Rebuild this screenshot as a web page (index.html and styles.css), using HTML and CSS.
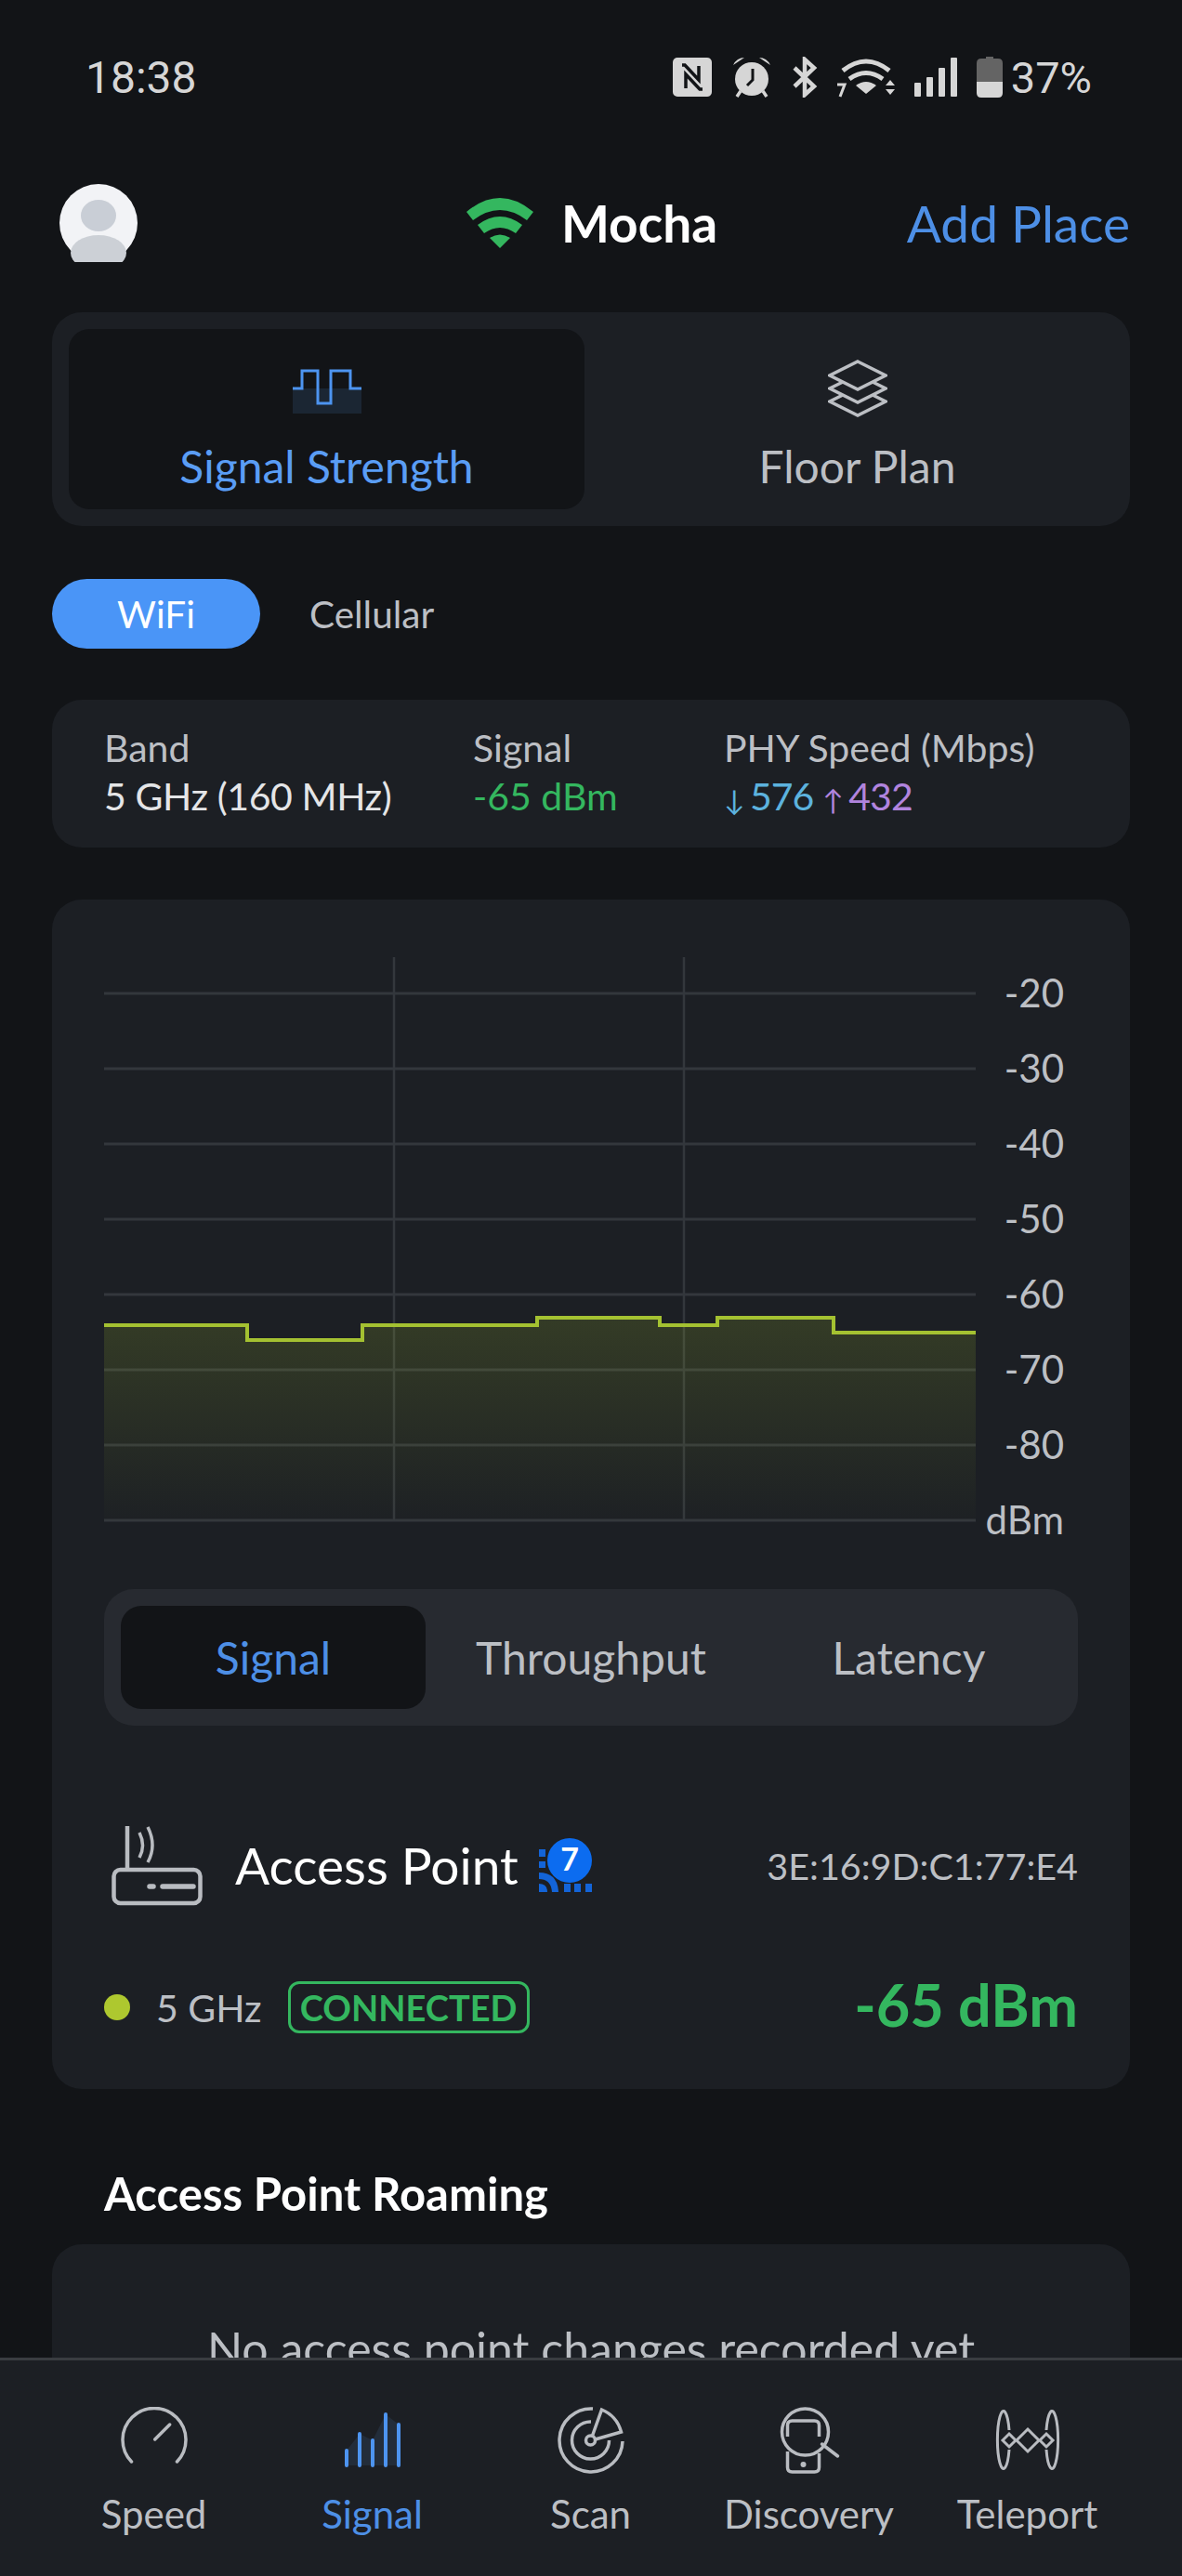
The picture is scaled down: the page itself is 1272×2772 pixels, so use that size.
FILE: index.html
```html
<!DOCTYPE html>
<html>
	<head>
		<title>Signal Strength</title>
		<link rel="stylesheet" href="styles.css">
	</head>
	<body>
		<div id="app">
			<!--status bar-->
			<div class="status">
				<span class="time">18:38</span>
				<div class="statusIcons">
					<svg width="42" height="42" viewBox="0 0 42 42"><rect width="42" height="42" rx="5" fill="#d6d6d6"/><path d="M10 8h3l15 16V9M32 34h-3L14 18v15" fill="none" stroke="#121417" stroke-width="3.5"/></svg>
					<svg width="44" height="46" viewBox="0 0 44 46"><circle cx="22" cy="25" r="18" fill="#d6d6d6"/><path d="M2 10q4-8 12-8zM42 10q-4-8-12-8z" fill="#d6d6d6"/><path d="M10 38l-4 6M34 38l4 6" stroke="#d6d6d6" stroke-width="3.5"/><path d="M23 14v12l-6 6" fill="none" stroke="#121417" stroke-width="3"/></svg>
					<svg width="28" height="44" viewBox="0 0 28 44"><path d="M3 12l21 20-10 9V3l10 9L3 32" fill="none" stroke="#d6d6d6" stroke-width="4.5"/></svg>
					<svg width="62" height="46" viewBox="0 0 62 46"><path d="M6 16q25-20 50 0M13 25q18-13 36 0" fill="none" stroke="#d6d6d6" stroke-width="5"/><path d="M20 32q11-8 22 0l-11 9z" fill="#d6d6d6"/><path d="M52 32l5-6 5 6zM52 36l5 6 5-6z" fill="#d6d6d6"/><path d="M0 31h8l-5 13" fill="none" stroke="#d6d6d6" stroke-width="3"/></svg>
					<svg width="46" height="42" viewBox="0 0 46 42" fill="#d6d6d6"><rect y="27" width="7" height="15" rx="1"/><rect x="13" y="21" width="7" height="21" rx="1"/><rect x="26" y="11" width="7" height="31" rx="1"/><rect x="39" width="7" height="42" rx="1"/></svg>
					<svg width="28" height="44" viewBox="0 0 28 44"><path d="M5 2h5V0h8v2h5q5 0 5 5v20H0V7q0-5 5-5z" fill="#646464"/><path d="M0 27h28v12q0 5-5 5H5q-5 0-5-5z" fill="#d6d6d6"/></svg>
					<span class="pct">37%</span>
				</div>
			</div>

			<!--top bar-->
			<div class="topbar">
				<div class="avatar">
					<svg width="84" height="84" viewBox="0 0 84 84"><circle cx="42" cy="42" r="42" fill="#f2f3f6"/><ellipse cx="42" cy="34" rx="19" ry="17" fill="#c9ced6"/><ellipse cx="42" cy="74" rx="30" ry="19" fill="#ccd0d6"/></svg>
				</div>
				<div class="place">
					<svg width="72" height="54" viewBox="0 0 72 54"><path d="M0 15q36-30 72 0l-7 9q-29-22-58 0z" fill="#34b75f"/><path d="M12 29q24-18 48 0l-7 9q-17-12-34 0z" fill="#34b75f"/><path d="M25 43q11-7 22 0l-11 11z" fill="#34b75f"/></svg>
					<span class="placeName">Mocha</span>
				</div>
				<span class="addPlace">Add Place</span>
			</div>

			<div class="main">
				<!--mode tabs-->
				<div class="modeTabs">
					<div class="modeTab active">
						<svg class="modeIcon" width="74" height="62" viewBox="0 -11 74 62"><rect y="20" width="74" height="27" fill="#1b2633"/><path d="M0 20H10V1H27V36H41V1H62V20H74" fill="none" stroke="#4d94f0" stroke-width="3"/></svg>
						<span>Signal Strength</span>
					</div>
					<div class="modeTab">
						<svg class="modeIcon" width="64" height="62" viewBox="0 0 64 62" fill="none" stroke="#bcbfc4" stroke-width="3.5"><path d="M32 2L62 17 32 32 2 17z"/><path d="M16 24L2 31 32 46 62 31 48 24"/><path d="M16 38L2 45 32 60 62 45 48 38"/></svg>
						<span>Floor Plan</span>
					</div>
				</div>

				<!--network switch-->
				<div class="netSwitch">
					<span class="pill">WiFi</span>
					<span class="netOther">Cellular</span>
				</div>

				<!--link info-->
				<div class="info">
					<div class="infoCol colBand">
						<span class="infoLabel">Band</span>
						<span class="infoValue bandValue">5 GHz (160 MHz)</span>
					</div>
					<div class="infoCol colSignal">
						<span class="infoLabel">Signal</span>
						<span class="infoValue green">-65 dBm</span>
					</div>
					<div class="infoCol">
						<span class="infoLabel">PHY Speed (Mbps)</span>
						<span class="infoValue speeds"><span class="down"><i>↓</i>576</span><span class="up"><i>↑</i>432</span></span>
					</div>
				</div>

				<!--chart card-->
				<div class="chartCard">
					<svg class="chart" width="1048" height="630" viewBox="0 0 1048 630">
						<defs>
							<linearGradient id="fade" x1="0" y1="0" x2="0" y2="1">
								<stop offset="0" stop-color="#a9c72f" stop-opacity="0.17"/>
								<stop offset="1" stop-color="#a9c72f" stop-opacity="0.01"/>
							</linearGradient>
						</defs>
						<g stroke="#33373c" stroke-width="3">
							<path d="M0 39H938M0 120H938M0 201H938M0 282H938M0 363H938M0 444H938M0 525H938M0 606H938"/>
							<path d="M312 0V606M624 0V606" stroke-width="2.5"/>
						</g>
						<path d="M0 396H154V412H278V396H466V388H598V396H660V388H785V404H938V606H0Z" fill="url(#fade)"/>
						<path d="M0 396H154V412H278V396H466V388H598V396H660V388H785V404H938" fill="none" stroke="#a4c131" stroke-width="4"/>
						<g class="axis" text-anchor="end">
							<text x="1033" y="54">-20</text>
							<text x="1033" y="135">-30</text>
							<text x="1033" y="216">-40</text>
							<text x="1033" y="297">-50</text>
							<text x="1033" y="378">-60</text>
							<text x="1033" y="459">-70</text>
							<text x="1033" y="540">-80</text>
							<text x="1033" y="621">dBm</text>
						</g>
					</svg>

					<div class="metricTabs">
						<span class="metricTab active">Signal</span>
						<span class="metricTab">Throughput</span>
						<span class="metricTab">Latency</span>
					</div>

					<div class="apRow">
						<svg class="router" width="98" height="88" viewBox="0 0 98 88" fill="none" stroke="#b9bcc1" stroke-width="4.5"><rect x="2.5" y="49" width="93" height="36" rx="7"/><path d="M17 2v47"/><path d="M30 9q7 14 0 27M39 3q10 20 0 38" stroke-width="3.5"/><path d="M41 67h4M55 67h33" stroke-width="5.5" stroke-linecap="round"/></svg>
						<span class="apName">Access Point</span>
						<svg class="wifi7" width="58" height="58" viewBox="0 0 58 58"><path d="M0 12h7v8H0zM0 25h7v7H0zM0 37q20 0 21 21h-7q-1-14-14-14zM0 49q9 0 9 9H0zM27 49h7v9h-7zM38 49h7v9h-7zM50 49h7v9h-7z" fill="#1364d8"/><circle cx="33" cy="24" r="24" fill="#0c6cf0"/><text x="33" y="35" text-anchor="middle" class="wifi7Num">7</text></svg>
						<span class="mac">3E:16:9D:C1:77:E4</span>
					</div>

					<div class="bandRow">
						<span class="dot"></span>
						<span class="bandName">5 GHz</span>
						<span class="connected">CONNECTED</span>
						<span class="bigSignal">-65 dBm</span>
					</div>
				</div>

				<h2 class="sectionTitle">Access Point Roaming</h2>
				<div class="roamCard">
					<p>No access point changes recorded yet</p>
				</div>
			</div>

			<!--bottom nav-->
			<div class="nav">
				<div class="navItem">
					<svg width="72" height="72" viewBox="0 0 72 72" fill="none" stroke="#b9bcc1" stroke-width="3.5" stroke-linecap="round"><path d="M11.5 59A34 34 0 1 1 60.5 59"/><path d="M36.7 35l16-16"/></svg>
					<span>Speed</span>
				</div>
				<div class="navItem active">
					<svg width="72" height="72" viewBox="0 0 72 72"><path d="M8 47L22 29 36 36 50 8 64 19V63H8z" fill="#232d3a"/><path d="M8 63V47M22 63V29M36 63V36M50 63V8M64 63V19" fill="none" stroke="#4d94f0" stroke-width="4" stroke-linecap="round"/></svg>
					<span>Signal</span>
				</div>
				<div class="navItem">
					<svg width="72" height="72" viewBox="0 0 72 72" fill="none" stroke="#b9bcc1" stroke-width="3.5"><path d="M38 2A34 34 0 1 0 70 37"/><path d="M36 16A20 20 0 1 0 55.5 36"/><circle cx="35.5" cy="36" r="5"/><path d="M37.5 31L47.5 3A36 36 0 0 1 68.5 27L40.5 35"/></svg>
					<span>Scan</span>
				</div>
				<div class="navItem">
					<svg width="72" height="72" viewBox="0 0 72 72" fill="none" stroke="#b9bcc1" stroke-width="3.5"><circle cx="31.5" cy="27" r="25"/><path d="M12.5 32V20q0-5 5-5h24q5 0 5 5V32"/><path d="M49.5 40L66.5 53" stroke-linecap="round"/><path d="M12.5 48V65q0 5 5 5h24q5 0 5-5V50"/><circle cx="29.5" cy="62" r="3" fill="#b9bcc1" stroke="none"/></svg>
					<span>Discovery</span>
				</div>
				<div class="navItem">
					<svg width="72" height="72" viewBox="0 0 72 72" fill="none" stroke="#b9bcc1" stroke-width="3"><path d="M16 25A6.5 31 0 1 0 16 46"/><path d="M56 25A6.5 31 0 1 1 56 46"/><path d="M36 24l12 12-12 12-12-12zM16 29l7 7-7 7-7-7zM56 29l7 7-7 7-7-7z"/></svg>
					<span>Teleport</span>
				</div>
			</div>
		</div>
	</body>
</html>
```

FILE: styles.css
```css
*{
	box-sizing: border-box;
}
body{
	margin: 0;
	background: #121417;
	font-family: Lato, sans-serif;
	color: #bcbfc4;
}
#app{
	height: 2772px;
	width: 1272px;
	display: flex;
	flex-direction: column;
	overflow: hidden;
}
.status{
	display: flex;
	justify-content: space-between;
	align-items: center;
	height: 84px;
	margin-top: 41px;
	padding: 0 97px 0 92px;
	color: #d6d6d6;
	font-family: Roboto, sans-serif;
	font-size: 48px;
}
.statusIcons{
	display: flex;
	align-items: center;
	gap: 21px;
}
.pct{
	margin-left: -12px;
	font-size: 47px;
}
.topbar{
	display: flex;
	align-items: center;
	height: 84px;
	margin-top: 73px;
	padding: 0 56px 0 64px;
}
.avatar{
	width: 84px;
	height: 84px;
}
.place{
	display: flex;
	align-items: center;
	gap: 30px;
	margin-left: 354px;
}
.placeName{
	color: #fff;
	font-size: 55px;
	font-weight: 700;
}
.addPlace{
	margin-left: auto;
	color: #4d8fe6;
	font-size: 55px;
}
.main{
	flex: 1;
	min-height: 0;
	overflow: hidden;
	padding: 54px 56px 0;
}
.modeTabs{
	display: flex;
	height: 230px;
	padding: 18px 0 18px 18px;
	background: #1c1f24;
	border-radius: 32px;
}
.modeTab{
	flex: 1;
	display: flex;
	flex-direction: column;
	align-items: center;
	gap: 24px;
	padding-top: 33px;
	font-size: 48px;
	border-radius: 22px;
}
.modeTab.active{
	flex: none;
	width: 555px;
	background: #121417;
	color: #5a9df5;
}
.netSwitch{
	display: flex;
	align-items: center;
	margin-top: 57px;
	font-size: 40.5px;
}
.pill{
	width: 224px;
	height: 75px;
	line-height: 75px;
	text-align: center;
	color: #fff;
	background: #4a95f7;
	border-radius: 38px;
}
.netOther{
	margin-left: 53px;
}
.info{
	display: flex;
	height: 159px;
	margin-top: 55px;
	padding: 27px 56px 0;
	background: #1c1f24;
	border-radius: 32px;
	font-size: 41px;
}
.infoCol{
	display: flex;
	flex-direction: column;
	gap: 3px;
}
.colBand{
	width: 397px;
}
.colSignal{
	width: 270px;
}
.infoValue{
	color: #e4e5e7;
}
.bandValue{
	letter-spacing: -0.4px;
}
.green{
	color: #34b75f;
}
.speeds{
	display: flex;
	letter-spacing: -1px;
}
.speeds i{
	display: inline-block;
	width: 28px;
	font-style: normal;
	font-size: 30px;
}
.down{
	color: #5cb2de;
	margin-right: 10px;
}
.up{
	color: #b184de;
}
.chartCard{
	height: 1280px;
	margin-top: 56px;
	padding: 62px 56px 0;
	background: #1c1f24;
	border-radius: 32px;
}
.chart{
	display: block;
}
.axis text{
	fill: #bcbfc4;
	font-size: 42px;
	font-family: Lato, sans-serif;
}
.metricTabs{
	display: grid;
	grid-template-columns: repeat(3, 1fr);
	height: 147px;
	margin-top: 50px;
	padding: 18px 11px;
	background: #272a30;
	border-radius: 32px;
}
.metricTab{
	display: flex;
	align-items: center;
	justify-content: center;
	font-size: 48px;
	border-radius: 22px;
}
.metricTab.active{
	margin: 0 7px;
	background: #121417;
	color: #4d8fe6;
}
.apRow{
	display: flex;
	align-items: center;
	height: 88px;
	margin-top: 106px;
	padding-left: 8px;
}
.router{
	margin-right: 35px;
}
.apName{
	color: #fff;
	font-size: 55px;
}
.wifi7{
	margin-left: 22px;
}
.wifi7Num{
	fill: #fff;
	font-size: 34px;
	font-weight: 700;
	font-family: Lato, sans-serif;
}
.mac{
	margin-left: auto;
	font-size: 39.5px;
}
.bandRow{
	display: flex;
	align-items: center;
	height: 60px;
	margin-top: 79px;
}
.dot{
	width: 28px;
	height: 28px;
	background: #aec82f;
	border-radius: 50%;
}
.bandName{
	margin-left: 28px;
	font-size: 41px;
}
.connected{
	margin-left: 28px;
	width: 260px;
	height: 56px;
	line-height: 50px;
	text-align: center;
	color: #34b75f;
	border: 3px solid #34b75f;
	border-radius: 12px;
	font-size: 38px;
	font-weight: 700;
}
.bigSignal{
	margin-left: auto;
	padding-bottom: 8px;
	color: #34b75f;
	font-size: 63px;
	font-weight: 700;
}
.sectionTitle{
	margin: 84px 0 0 56px;
	height: 56px;
	line-height: 56px;
	color: #fff;
	font-size: 49px;
	font-weight: 700;
}
.roamCard{
	height: 300px;
	margin-top: 27px;
	padding-top: 82px;
	background: #1c1f24;
	border-radius: 32px;
	text-align: center;
}
.roamCard p{
	margin: 0;
	font-size: 50px;
}
.nav{
	display: grid;
	grid-template-columns: repeat(5, 235px);
	flex-shrink: 0;
	height: 235px;
	padding: 50px 0 0 48px;
	background: #1c1f24;
	border-top: 3px solid #3a3d41;
}
.navItem{
	display: flex;
	flex-direction: column;
	align-items: center;
	gap: 18px;
	font-size: 42px;
}
.navItem.active{
	color: #4d8fe6;
}
```
